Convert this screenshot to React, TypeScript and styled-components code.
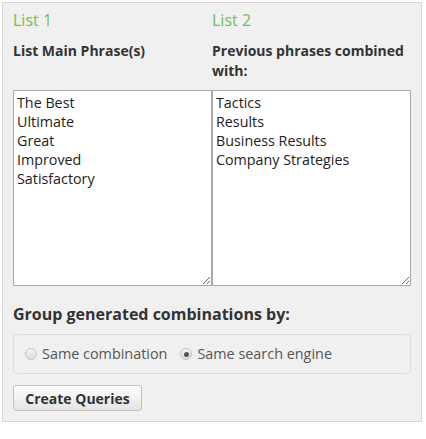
import React from "react";
import styled, { createGlobalStyle } from "styled-components";

const Global = createGlobalStyle`
  html, body { margin: 0; padding: 0; background: #fff; }
  body { font-family: "Open Sans", "Liberation Sans", Arial, sans-serif; color: #333; }
  * { box-sizing: border-box; }
`;

const Panel = styled.div`
  margin: 2px 0 0 2px;
  width: 420px;
  height: 420px;
  border: 1px solid #d6d6d6;
  background: #f0f0f0;
  padding: 6px 10px 0 10px;
`;

const Columns = styled.div`
  display: grid;
  grid-template-columns: 199px 199px;
  column-gap: 0;
`;

const Column = styled.div`
  display: flex;
  flex-direction: column;
`;

const ListTitle = styled.div`
  font-size: 16px;
  line-height: 22px;
  color: #72c050;
  font-weight: 400;
  margin-bottom: 10px;
`;

const Label = styled.div`
  font-size: 14px;
  line-height: 20px;
  font-weight: 700;
  color: #333;
  height: 40px;
  margin-bottom: 9px;
`;

const Area = styled.textarea`
  display: block;
  width: 199px;
  height: 196px;
  margin: 0;
  border: 1px solid #a9a9a9;
  background: #fff;
  padding: 2px 3px;
  font-family: "Open Sans", "Liberation Sans", Arial, sans-serif;
  font-size: 14.3px;
  line-height: 19px;
  color: #222;
  resize: both;
  outline: none;
`;

const GroupTitle = styled.div`
  font-size: 16px;
  line-height: 22px;
  font-weight: 700;
  color: #333;
  margin-top: 17px;
`;

const RadioBox = styled.div`
  margin-top: 9px;
  width: 398px;
  height: 40px;
  border: 1px solid #dcdcdc;
  border-radius: 4px;
  display: flex;
  align-items: center;
  padding-left: 11px;
  gap: 13px;
`;

const RadioLabel = styled.label`
  display: flex;
  align-items: center;
  gap: 5px;
  font-size: 14.4px;
  color: #555;
  line-height: 20px;
`;

const RadioDot = styled.span<{ $checked?: boolean }>`
  width: 12px;
  height: 12px;
  border-radius: 50%;
  border: 1px solid #c4c4c4;
  background: linear-gradient(#f4f4f4, #dcdcdc);
  display: inline-flex;
  align-items: center;
  justify-content: center;
  &::after {
    content: "";
    width: 5px;
    height: 5px;
    border-radius: 50%;
    background: ${(p) => (p.$checked ? "#555" : "transparent")};
  }
`;

const Button = styled.button`
  margin-top: 11px;
  width: 129px;
  height: 26px;
  border: 1px solid #c2c2c2;
  border-radius: 3px;
  background: linear-gradient(#fdfdfd, #e4e4e4);
  font-family: "Open Sans", "Liberation Sans", Arial, sans-serif;
  font-size: 14px;
  font-weight: 700;
  color: #333;
  padding: 0;
  display: block;
`;

export default function App() {
  return (
    <>
      <Global />
      <Panel>
        <Columns>
          <Column>
            <ListTitle>List 1</ListTitle>
            <Label>List Main Phrase(s)</Label>
            <Area defaultValue={"The Best\nUltimate\nGreat\nImproved\nSatisfactory"} />
          </Column>
          <Column>
            <ListTitle>List 2</ListTitle>
            <Label>Previous phrases combined with:</Label>
            <Area defaultValue={"Tactics\nResults\nBusiness Results\nCompany Strategies"} />
          </Column>
        </Columns>
        <GroupTitle>Group generated combinations by:</GroupTitle>
        <RadioBox>
          <RadioLabel>
            <RadioDot />
            Same combination
          </RadioLabel>
          <RadioLabel>
            <RadioDot $checked />
            Same search engine
          </RadioLabel>
        </RadioBox>
        <Button>Create Queries</Button>
      </Panel>
    </>
  );
}
